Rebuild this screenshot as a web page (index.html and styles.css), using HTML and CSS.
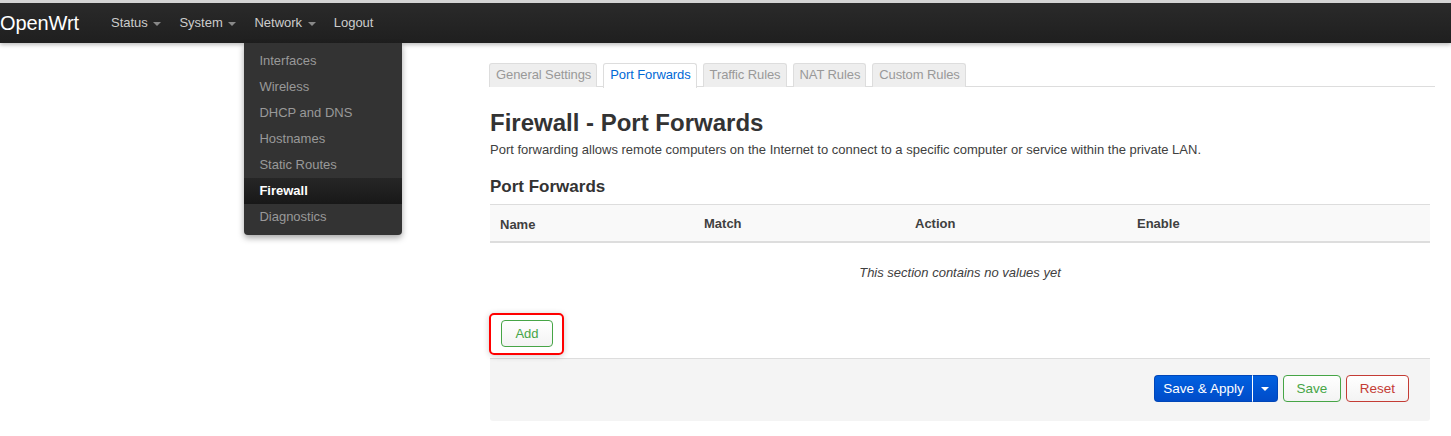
FILE: index.html
```html
<!DOCTYPE html>
<html>
<head>
<meta charset="utf-8">
<link rel="stylesheet" href="styles.css">
</head>
<body>
<header class="navbar">
  <a class="brand">OpenWrt</a>
  <ul class="nav">
    <li class="nav-item">Status <span class="caret"></span></li>
    <li class="nav-item">System <span class="caret"></span></li>
    <li class="nav-item open">Network <span class="caret"></span>
      <ul class="dropdown">
        <li>Interfaces</li>
        <li>Wireless</li>
        <li>DHCP and DNS</li>
        <li>Hostnames</li>
        <li>Static Routes</li>
        <li class="active">Firewall</li>
        <li>Diagnostics</li>
      </ul>
    </li>
    <li class="nav-item">Logout</li>
  </ul>
</header>
<main class="main">
  <ul class="tabs">
    <li class="tab">General Settings</li>
    <li class="tab active">Port Forwards</li>
    <li class="tab">Traffic Rules</li>
    <li class="tab">NAT Rules</li>
    <li class="tab">Custom Rules</li>
  </ul>
  <h2 class="title">Firewall - Port Forwards</h2>
  <p class="desc">Port forwarding allows remote computers on the Internet to connect to a specific computer or service within the private LAN.</p>
  <h3 class="section-title">Port Forwards</h3>
  <div class="table">
    <div class="thead">
      <div class="th th-name">Name</div>
      <div class="th">Match</div>
      <div class="th">Action</div>
      <div class="th">Enable</div>
    </div>
    <div class="empty">This section contains no values yet</div>
  </div>
  <div class="add-row">
    <div class="highlight"><button class="btn btn-add">Add</button></div>
  </div>
  <div class="actions">
    <div class="split">
      <button class="btn btn-apply">Save &amp; Apply</button><button class="btn btn-apply btn-toggle"><span class="caret white"></span></button>
    </div>
    <button class="btn btn-save">Save</button>
    <button class="btn btn-reset">Reset</button>
  </div>
</main>
</body>
</html>
```
FILE: styles.css
```css
* { box-sizing: border-box; }
html, body { margin: 0; padding: 0; background: #fff; }
body { font-family: "Liberation Sans", Arial, sans-serif; font-size: 13px; color: #404040; }
ul { list-style: none; margin: 0; padding: 0; }

.navbar {
  height: 43px;
  border-top: 3px solid #d4d4d4;
  background: linear-gradient(#2a2a2a, #1f1f1f);
  display: flex;
  align-items: center;
  box-shadow: 0 2px 4px rgba(0,0,0,0.25);
  position: relative;
  z-index: 2;
}
.brand { color: #fff; font-size: 20px; padding: 0 30px 0 0; line-height: 40px; letter-spacing: -0.1px; }
.nav { display: flex; height: 40px; margin-left: 2px; }
.nav-item { color: #ccc; padding: 0 9px; line-height: 40px; position: relative; font-size: 13px; }
.nav-item:first-child { padding-left: 0; }
.caret {
  display: inline-block; width: 0; height: 0; vertical-align: middle; margin-left: 2px;
  border-left: 4px solid transparent; border-right: 4px solid transparent; border-top: 4px solid #888;
}
.caret.white { border-top-color: #fff; margin: 0; }
.dropdown {
  position: absolute; top: 40px; left: -1px; width: 158px;
  background: #333; padding: 5px 0 5px; border-radius: 0 0 4px 4px;
  box-shadow: 0 3px 6px rgba(0,0,0,0.35);
}
.dropdown li { line-height: 26px; padding: 0 15px; color: #999; }
.dropdown li.active { background: linear-gradient(#262626, #181818); color: #fff; font-weight: bold; }

.main { margin-left: 490px; width: 945px; padding-top: 20px; }
.tabs { display: flex; gap: 6px; border-bottom: 1px solid #ddd; margin-left: -1px; height: 24px; }
.tab {
  height: 24px; line-height: 22px; padding: 0 5px 0 6px; color: #999; background: #eee;
  border: 1px solid #ddd; border-bottom: none; border-radius: 3px 3px 0 0; letter-spacing: -0.1px;
}
.tab.active { background: #fff; color: #0069d6; height: 25px; }

.title { font-size: 24px; font-weight: bold; color: #333; margin: 22px 0 0; line-height: 28px; }
.desc { margin: 4px 0 0; line-height: 18px; color: #404040; }
.section-title { font-size: 17px; font-weight: bold; color: #333; margin: 18px 0 0; line-height: 20px; }

.table { width: 940px; margin-top: 7px; }
.thead {
  display: grid; grid-template-columns: 214px 211px 222px 1fr;
  background: #f9f9f9; border-top: 1px solid #ddd; border-bottom: 2px solid #ddd; height: 39px; align-items: center;
}
.th { font-weight: bold; color: #404040; }
.th-name { padding-left: 10px; padding-top: 2px; }
.empty { text-align: center; font-style: italic; color: #404040; height: 59px; line-height: 59px; }

.btn { font-family: inherit; font-size: 13px; border-radius: 4px; cursor: pointer; height: 27px; padding: 0; background: linear-gradient(#fff, #f3f3f3); }
.add-row { padding: 11px 0 0 0; height: 55px; }
.highlight {
  display: inline-block; border: 2px solid #f00; border-radius: 5px; padding: 5px 9px 6px 10px;
  box-shadow: 0 1px 6px rgba(0,0,0,0.2);
  margin-left: -1px;
}
.btn-add { border: 1px solid #46a546; color: #46a546; width: 52px; display: block; }

.actions {
  width: 940px; height: 63px; background: #f4f4f4; border-top: 1px solid #ddd; border-radius: 0 0 3px 3px;
  display: flex; justify-content: flex-end; align-items: center; gap: 5px; padding-right: 21px; margin-top: 1px;
  padding-bottom: 3px;
}
.split { display: flex; }
.btn-apply { background: linear-gradient(#0060e0, #004cc9); border: 1px solid #0046b8; color: #fff; font-size: 13.5px; }
.split .btn-apply:first-child { border-radius: 4px 0 0 4px; width: 99px; border-right: 1px solid #fff; }
.btn-toggle { border-radius: 0 4px 4px 0; width: 25px; border-left: none; }
.btn-save { border: 1px solid #46a546; color: #46a546; width: 58px; font-size: 13.5px; }
.btn-reset { border: 1px solid #c43c35; color: #c43c35; width: 63px; font-size: 13.5px; }
```
